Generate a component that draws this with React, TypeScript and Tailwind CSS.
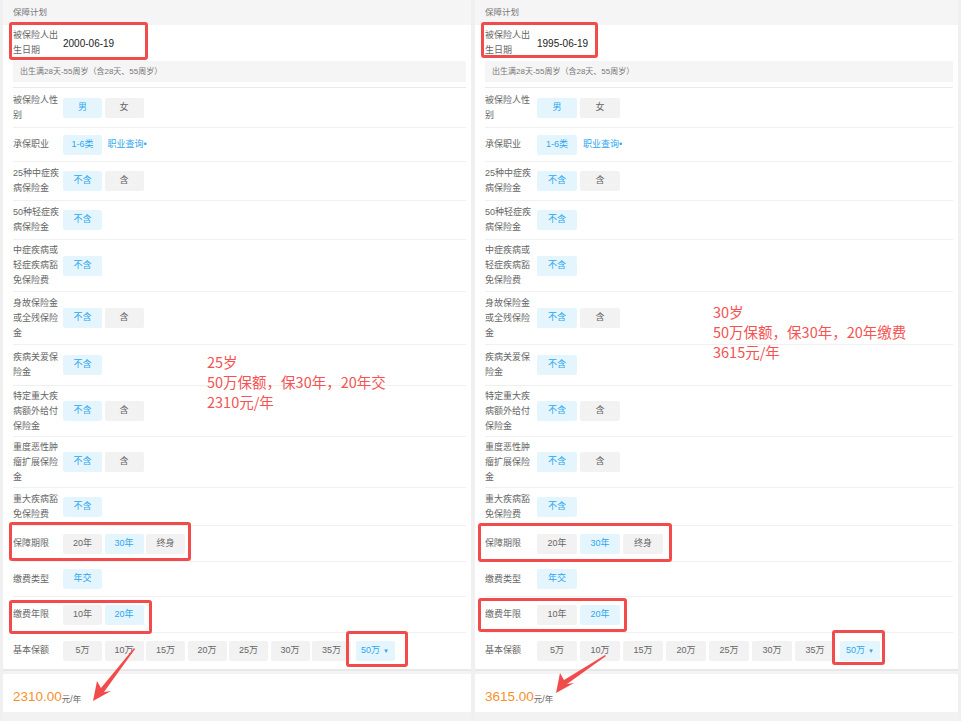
import React from 'react';

type Opt = { text: string; on?: boolean };

type RowDef = {
  label: string;
  h: string;
  opts: Opt[];
  link?: boolean;
  noLine?: boolean;
};

const rows: RowDef[] = [
  { label: '被保险人性\n别', h: 'h-[40px]', opts: [{ text: '男', on: true }, { text: '女' }] },
  { label: '承保职业', h: 'h-[34px]', opts: [{ text: '1-6类', on: true }], link: true },
  { label: '25种中症疾\n病保险金', h: 'h-[39px]', opts: [{ text: '不含', on: true }, { text: '含' }] },
  { label: '50种轻症疾\n病保险金', h: 'h-[39px]', opts: [{ text: '不含', on: true }] },
  { label: '中症疾病或\n轻症疾病豁\n免保险费', h: 'h-[52px]', opts: [{ text: '不含', on: true }] },
  { label: '身故保险金\n或全残保险\n金', h: 'h-[53px]', opts: [{ text: '不含', on: true }, { text: '含' }] },
  { label: '疾病关爱保\n险金', h: 'h-[41px]', opts: [{ text: '不含', on: true }] },
  { label: '特定重大疾\n病额外给付\n保险金', h: 'h-[51px]', opts: [{ text: '不含', on: true }, { text: '含' }] },
  { label: '重度恶性肿\n瘤扩展保险\n金', h: 'h-[51px]', opts: [{ text: '不含', on: true }, { text: '含' }] },
  { label: '重大疾病豁\n免保险费', h: 'h-[38px]', opts: [{ text: '不含', on: true }] },
  { label: '保障期限', h: 'h-[36px]', opts: [{ text: '20年' }, { text: '30年', on: true }, { text: '终身' }] },
  { label: '缴费类型', h: 'h-[35px]', opts: [{ text: '年交', on: true }] },
  { label: '缴费年限', h: 'h-[36px]', opts: [{ text: '10年' }, { text: '20年', on: true }] },
];

const amounts = ['5万', '10万', '15万', '20万', '25万', '30万', '35万'];

type Box = { x: number; y: number; w: number; h: number };

type PanelProps = {
  birth: string;
  price: string;
  note: string[];
  noteX: number;
  noteY: number;
  boxes: Box[];
  arrow: { x: number; y: number; w: number; h: number };
  wide?: boolean;
};

function Btn({ text, on, wide }: Opt & { wide?: boolean }) {
  return (
    <div
      className={
        (wide ? 'w-[40px] ' : 'w-[39px] ') +
        'h-[20px] rounded-[2px] flex items-center justify-center text-[9px] ' +
        (on ? 'bg-[#e4f5fe] text-[#2ca6f0]' : 'bg-[#f2f2f2] text-[#666]')
      }
    >
      {text}
    </div>
  );
}

function Panel({ birth, price, note, noteX, noteY, boxes, arrow, wide }: PanelProps) {
  const gap = wide ? 'gap-[3px]' : 'gap-[2.5px]';
  const labelW = wide ? 'w-[52px]' : 'w-[50px]';
  return (
    <div className="relative flex-1 bg-white flex flex-col">
      <div className="h-[25px] bg-[#f5f5f5] flex items-center pl-[10px] text-[8.5px] text-[#777]">保障计划</div>

      <div className="pl-[10px] pr-[5px] flex flex-col">
        <div className="h-[36px] flex items-center">
          <div className={labelW + ' whitespace-pre-line text-[9px] leading-[15px] text-[#666]'}>{'被保险人出\n生日期'}</div>
          <div className="text-[10px] text-[#222]">{birth}</div>
        </div>
        <div className="h-[21px] bg-[#f5f5f5] flex items-center pl-[7px] text-[8px] text-[#777]">
          出生满28天-55周岁（含28天、55周岁）
        </div>
        <div className="h-[6px] border-b border-[#e9e9e9]" />

        {rows.map((r) => (
          <div key={r.label} className={r.h + ' flex items-center border-b border-[#f0f0f0]'}>
            <div className={labelW + ' shrink-0 whitespace-pre-line text-[9px] leading-[15px] text-[#666]'}>{r.label}</div>
            <div className={'flex items-center ' + gap}>
              {r.opts.map((o) => (
                <Btn key={o.text} {...o} wide={wide} />
              ))}
              {r.link && <span className="ml-[3px] text-[9px] text-[#2ca6f0]">职业查询•</span>}
            </div>
          </div>
        ))}

        <div className="h-[36px] flex items-center">
          <div className={labelW + ' shrink-0 text-[9px] text-[#666]'}>基本保额</div>
          <div className={'flex items-center ' + gap}>
            {amounts.map((a) => (
              <Btn key={a} text={a} wide={wide} />
            ))}
            <div
              className={
                (wide ? 'w-[40px] ml-[2px] ' : 'w-[39px] ml-[2px] ') +
                'h-[20px] rounded-[2px] bg-[#e4f5fe] text-[#2ca6f0] text-[9px] flex items-center justify-center gap-[3px]'
              }
            >
              50万<span className="text-[6px]">▼</span>
            </div>
          </div>
        </div>
      </div>

      <div className="h-[5px] bg-[#f3f3f3] border-t-2 border-[#e8e8e8]" />
      <div className="h-[38px] flex items-end pb-[9px] pl-[10px]">
        <span className="text-[13.5px] leading-none text-[#f7912c]">{price}</span>
        <span className="text-[8.5px] leading-none text-[#666]">元/年</span>
      </div>
      <div className="flex-1 bg-[#f2f2f2]" />

      {/* 标注 */}
      {boxes.map((b, i) => (
        <div
          key={i}
          className="absolute border-[3px] border-[#f24b4b] rounded-[3px]"
          style={{ left: b.x, top: b.y, width: b.w, height: b.h }}
        />
      ))}
      <div
        className="absolute text-[14.5px] leading-[20px] text-[#f45353] font-[family-name:'Noto_Sans_CJK_SC',sans-serif]"
        style={{ left: noteX, top: noteY }}
      >
        {note.map((n) => (
          <div key={n}>{n}</div>
        ))}
      </div>
      <svg
        className="absolute"
        style={{ left: arrow.x, top: arrow.y, width: arrow.w, height: arrow.h }}
        viewBox={`0 0 ${arrow.w} ${arrow.h}`}
      >
        <polygon
          fill="#f24b4b"
          points={`0,${arrow.h} 18,${arrow.h - 10} 11,${arrow.h - 9} ${arrow.w},1 ${arrow.w - 1},0 8,${arrow.h - 13} 4,${arrow.h - 20}`}
        />
      </svg>
    </div>
  );
}

export default function App() {
  return (
    <div className="w-[961px] h-[721px] overflow-hidden bg-[#f0f0f0] flex gap-[4px] pl-[3px] pr-[3px] font-[family-name:'Liberation_Sans','Noto_Sans_CJK_SC',sans-serif]">
      <div className="w-[468px] flex">
        <Panel
          birth="2000-06-19"
          price="2310.00"
          note={['25岁', '50万保额，保30年，20年交', '2310元/年']}
          noteX={204}
          noteY={352}
          boxes={[
            { x: 6, y: 22, w: 139, h: 38 },
            { x: 6, y: 522, w: 182, h: 39 },
            { x: 6, y: 600, w: 143, h: 34 },
            { x: 343, y: 631, w: 62, h: 36 },
          ]}
          arrow={{ x: 90, y: 648, w: 42, h: 53 }}
        />
      </div>
      <div className="flex-1 flex">
        <Panel
          wide
          birth="1995-06-19"
          price="3615.00"
          note={['30岁', '50万保额，保30年，20年缴费', '3615元/年']}
          noteX={238}
          noteY={302}
          boxes={[
            { x: 6, y: 22, w: 117, h: 36 },
            { x: 3, y: 523, w: 194, h: 39 },
            { x: 3, y: 598, w: 149, h: 34 },
            { x: 357, y: 630, w: 53, h: 35 },
          ]}
          arrow={{ x: 81, y: 655, w: 50, h: 38 }}
          />
      </div>
    </div>
  );
}
